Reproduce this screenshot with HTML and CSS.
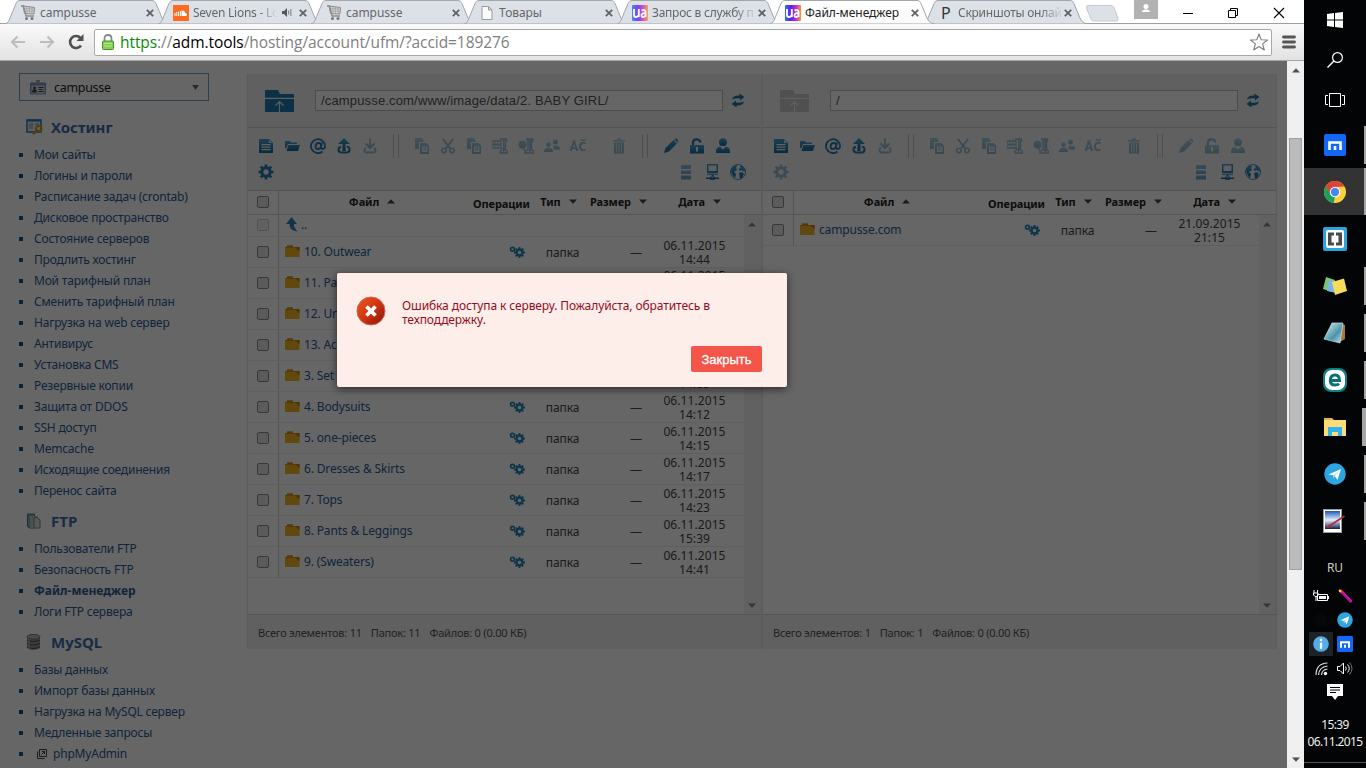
FILE: index.html
```html
<!DOCTYPE html>
<html lang="ru">
<head>
<meta charset="utf-8">
<title>Файл-менеджер</title>
<link rel="stylesheet" href="styles.css">
</head>
<body>
<svg class="defs" width="0" height="0">
  <defs>
    <linearGradient id="gTab" x1="0" y1="0" x2="0" y2="1"><stop offset="0" stop-color="#fff"/><stop offset="1" stop-color="#fafafa"/></linearGradient>
    <linearGradient id="gUa"><stop offset="0" stop-color="#2f6bff"/><stop offset=".35" stop-color="#5a22f0"/><stop offset=".65" stop-color="#c020e0"/><stop offset="1" stop-color="#ff9a20"/></linearGradient>
    <linearGradient id="gErr" x1="0" y1="0" x2="1" y2="1"><stop offset="0" stop-color="#ee5a1c"/><stop offset=".5" stop-color="#cf3410"/><stop offset="1" stop-color="#8c0f08"/></linearGradient>
    <linearGradient id="gBlue" x1="0" y1="0" x2="0" y2="1"><stop offset="0" stop-color="#4a9fce"/><stop offset="1" stop-color="#12699e"/></linearGradient>
    <linearGradient id="gGlass" x1="0" y1="0" x2="1" y2="1"><stop offset="0" stop-color="#dff3f7"/><stop offset=".6" stop-color="#4b95a8"/><stop offset="1" stop-color="#bfe6ee"/></linearGradient>
    <linearGradient id="gSky" x1="0" y1="0" x2="0" y2="1"><stop offset="0" stop-color="#1e56b8"/><stop offset=".5" stop-color="#e4efff"/><stop offset="1" stop-color="#101c4c"/></linearGradient>
  </defs>
  <symbol id="tab" viewBox="0 0 166 24"><path d="M0 24C3 23 4 21 5 18L11 3.500C12 1.500 13 .5 15 .5H147C149 .5 150 1.500 151 3.500L157 18C158.500 21 160 23 164 24Z"/></symbol>
  <symbol id="x" viewBox="0 0 8 8"><path d="M.8.8l6.400 6.400M7.200.8L.8 7.200" fill="none" stroke="#606164" stroke-width="1.800"/></symbol>
  <symbol id="cart" viewBox="0 0 16 16"><path d="M14.500 2.500L3 1 4.500 8.500 14 9z" fill="#d8d8d8" stroke="#8c8c8c"/><path d="M1 1h2.500L6 11h8" fill="none" stroke="#8b8b8b" stroke-width="1.400"/><path d="M4 3.500l10.500.6M4.500 6l9.800.2M7 2v7M9.500 2v7M12 2v7" stroke="#999" stroke-width=".7"/><circle cx="6.500" cy="13.500" r="1.500" fill="#777"/><circle cx="12" cy="13.500" r="1.500" fill="#777"/></symbol>
  <symbol id="ua" viewBox="0 0 16 16"><rect width="16" height="16" rx="1" fill="url(#gUa)"/><path d="M2 4v6q0 2 2 2 1.800 0 2.600-1.500M6.800 4v8M9.500 5.500Q13.500 4 13.500 7v5M13.500 8Q9.500 8 9.500 10.300q0 2.200 2 1.700 1.500-.3 2-1.500" fill="none" stroke="#fff" stroke-width="1.900"/></symbol>
  <symbol id="doc" viewBox="0 0 16 16"><path fill-rule="evenodd" d="M1 1h10l4 4v10H1zM3.500 6v1.200h9V6zm0 2.500v1.200h9V8.500zm0 2.500v1.200h9V11zM11 2v3h3z"/></symbol>
  <symbol id="open" viewBox="0 0 16 16"><path d="M1 3h5l1 1.500h6V6H4L2 11 1 9zM4.500 7H16l-2 6H2.500z"/></symbol>
  <symbol id="at" viewBox="0 0 16 16"><path d="M12.500 13.500A7 7 0 1 1 15 8.500Q14.800 11 12.700 11 10.800 11 11.200 8.500L12 4.500M11 8.500Q10.500 11 8 11 5.500 11 5.500 8.500 5.800 5 8.500 5 11.200 5 11 8" fill="none" stroke="currentColor" stroke-width="1.800"/></symbol>
  <symbol id="up" viewBox="0 0 16 16"><path d="M8 0l6 6H9.500V13h-3V6H2z"/><path d="M5 9Q2.500 9 2.500 11.500T5 14.500h6q2.500 0 2.500-3T11 9" fill="none" stroke="currentColor" stroke-width="2"/></symbol>
  <symbol id="down" viewBox="0 0 16 16"><path d="M7 0h2v7l3-2.500 1 2L8 11.500 3 6.500l1-2L7 7z"/><path d="M3.500 9.500Q1 14.500 5 14.500h6q4 0 1.500-5" fill="none" stroke="currentColor" stroke-width="2"/></symbol>
  <symbol id="copy" viewBox="0 0 16 16"><path fill-rule="evenodd" d="M1 0h6.500l2 2v2H5v7H1zM6 5h6.500L15 7.500V16H6zM8 8.500V14h5.500V8.500zM9 9.500h3.500v1H9zm0 2h3.500v1H9z"/></symbol>
  <symbol id="cut" viewBox="0 0 16 16"><path d="M3 1l7.500 10M13 1L5.500 11" fill="none" stroke="currentColor" stroke-width="2"/><circle cx="4" cy="12.500" r="2.200" fill="none" stroke="currentColor" stroke-width="1.600"/><circle cx="12" cy="12.500" r="2.200" fill="none" stroke="currentColor" stroke-width="1.600"/></symbol>
  <symbol id="zip" viewBox="0 0 16 16"><path d="M0 3h9v7H0zM3 4.500v4M6 4.500v4M1 6.500h8M8 1h6.500v2h-1v9l2 1v2H8v-2l2-1V10M11.700 1v13" fill="none" stroke="currentColor" stroke-width="1.300"/><path d="M11 4h2v1.500h-2zm0 3h2v1.500h-2zm0 3h2v1.500h-2z"/></symbol>
  <symbol id="unzip" viewBox="0 0 16 16"><circle cx="4.500" cy="6.500" r="4"/><path d="M5 10l2 2M8 1h6.500v2h-1v9l2 1v2H7v-2l3-1V1M12 1v13" fill="none" stroke="currentColor" stroke-width="1.500"/></symbol>
  <symbol id="users" viewBox="0 0 16 16"><circle cx="4.500" cy="6.500" r="2.300"/><path d="M0 14q0-4.500 4.500-4.500T9 14z"/><circle cx="11.500" cy="4" r="2.500"/><path d="M9 8q6.500-2 7.500 3.500H10z"/></symbol>
  <symbol id="trash" viewBox="0 0 16 16"><path d="M2 2h12v1.500H2zM6 .5h4v2H6zM3 4.500h10v11H3z"/><path d="M5.500 5.500v9M8 5.500v9M10.500 5.500v9" stroke="#eee" stroke-width=".8"/></symbol>
  <symbol id="pen" viewBox="0 0 16 16"><path d="M1 15l1.500-5 8-8 3.500 3.500-8 8zM11.300 1.200q1.700-1.500 3.200 0t0 3.200z"/></symbol>
  <symbol id="lock" viewBox="0 0 16 16"><path d="M4 7V4.500Q4 1.300 7.500 1.300T11.500 4.500" fill="none" stroke="currentColor" stroke-width="2.200"/><path fill-rule="evenodd" d="M1 7h14v8.500H1zM7 9v4.500h2V9z"/></symbol>
  <symbol id="user" viewBox="0 0 16 16"><circle cx="8" cy="4.200" r="3.900"/><path d="M1 15v-2q0-3.500 4-4.500l3 3 3-3q4 1 4 4.500v2z"/></symbol>
  <symbol id="gear" viewBox="0 0 16 16"><circle cx="8" cy="8" r="4.200" fill="none" stroke="currentColor" stroke-width="3"/><path d="M8 .5v3M8 12.500v3M.5 8h3M12.500 8h3M2.700 2.700l2 2M11.300 11.300l2 2M2.700 13.300l2-2M11.300 4.700l2-2" stroke="currentColor" stroke-width="2.600"/></symbol>
  <symbol id="gears" viewBox="0 0 16 12"><circle cx="3.500" cy="3.300" r="1.900" fill="none" stroke="currentColor" stroke-width="1.700"/><circle cx="10.500" cy="6.500" r="3" fill="none" stroke="currentColor" stroke-width="2.400"/><path d="M10.500 1v2M10.500 10v2M5 6.500h2M14 6.500h2M6.700 2.700l1.400 1.400M12.900 8.900l1.400 1.400M6.700 10.300l1.400-1.400M12.900 4.100l1.400-1.400" stroke="currentColor" stroke-width="1.800"/></symbol>
  <symbol id="rows" viewBox="0 0 16 16"><path d="M3 1h10v4H3zm0 5.500h10v3.500H3zM3 11.500h10v4H3z"/></symbol>
  <symbol id="pc" viewBox="0 0 16 16"><path fill-rule="evenodd" d="M3 0h11v9H3zM4.500 1.500v5.500h8V1.500zM3 9.700h11v1H3zM7.500 11h2v2.500h-2zM2 13.500h4v-.7h5v.7h4V15h-4v.7H6V15H2z"/></symbol>
  <symbol id="globe" viewBox="0 0 16 16"><circle cx="8" cy="8" r="7.500" fill="none" stroke="currentColor" stroke-width=".8"/><path d="M1 5l3-3.500 3.500 0L6 4 7 6 4 8l2 2-1 4-2-2-1.500-3zM10 1l3.500 2L15.500 7l-2 .5-2-1.500-2 1-1-2 2-1zM9 9l3-1 2 2-2 4-2 .5-.5-3z"/></symbol>
  <symbol id="refresh" viewBox="0 0 14 14"><path d="M1 6Q2 1.500 8.500 2V0L13.500 3.500 9 7V5Q5 4.300 1 6zM13 8Q12 12.500 5.500 12V14L.5 10.500 5 7V9Q9 9.700 13 8z"/></symbol>
  <symbol id="bigup" viewBox="0 0 29 22"><path d="M0 1Q0 0 1 0h12l2 4h13q1 0 1 1v2.700H0z"/><path d="M0 9h29v12q0 1-1 1H1q-1 0-1-1z"/><path d="M14.500 22V12M10.500 15.500l4-4 4 4" fill="none" stroke="#eee" stroke-width="1.100"/></symbol>
  <symbol id="folder" viewBox="0 0 15 12"><path d="M0 2h2V.5h6V2h6.500v10H0z" fill="#f0b323"/><path d="M0 2h2V.5h6V2h4v.8H0z" fill="#d08c18"/><path d="M10 2h4.500v4.500z" fill="#c97b10"/></symbol>
  <symbol id="sortd" viewBox="0 0 8 5"><path d="M0 .5h8L4 4.800z" fill="#444"/></symbol>
  <symbol id="sortu" viewBox="0 0 8 5"><path d="M0 4.500h8L4 .2z" fill="#444"/></symbol>
  <symbol id="mx" viewBox="0 0 22 22"><rect width="22" height="22" rx="2" fill="#1268f5"/><path d="M5.500 16V8.500h11V16M11 12v4" fill="none" stroke="#fff" stroke-width="2.600"/></symbol>
  <symbol id="tg" viewBox="0 0 22 22"><circle cx="11" cy="11" r="10.700" fill="#2ca5e0"/><path d="M4.500 11.500L17 6l-3.500 11-3-4.500z" fill="#fff"/><path d="M9 12.500l6-4.500-4.500 5.500-1 2.500z" fill="#b8d8ea"/></symbol>
</svg>

<div class="browser">
  <div class="tabs">
    <div class="tab"><svg class="tab-bg"><use href="#tab"/></svg><svg class="fav"><use href="#cart"/></svg><span class="tab-title">campusse</span><svg class="tab-x"><use href="#x"/></svg></div>
    <div class="tab"><svg class="tab-bg"><use href="#tab"/></svg><svg class="fav" viewBox="0 0 16 16"><rect width="16" height="16" fill="#ff6a22"/><path d="M2 8v3M3.800 7v4M5.600 6.500V11M7.400 6v5" stroke="#fff"/><path d="M8.500 11V5.500Q12 5 12 8q2-.3 2 1.500T12.500 11z" fill="#fff"/></svg><span class="tab-title fade short">Seven Lions - Lo</span><svg class="sound" viewBox="0 0 10 9"><path d="M0 3h2l3-3v9L2 6H0z" fill="#555"/><path d="M6.700 2.500v4M8.900 1v7" stroke="#777"/></svg><svg class="tab-x"><use href="#x"/></svg></div>
    <div class="tab"><svg class="tab-bg"><use href="#tab"/></svg><svg class="fav"><use href="#cart"/></svg><span class="tab-title">campusse</span><svg class="tab-x"><use href="#x"/></svg></div>
    <div class="tab"><svg class="tab-bg"><use href="#tab"/></svg><svg class="fav" viewBox="0 0 16 16"><path d="M3 1.500h6.500l3.500 3.500v9.500H3zM9.500 1.500v3.500H13" fill="#fafafa" stroke="#999"/></svg><span class="tab-title">Товары</span><svg class="tab-x"><use href="#x"/></svg></div>
    <div class="tab"><svg class="tab-bg"><use href="#tab"/></svg><svg class="fav dim"><use href="#ua"/></svg><span class="tab-title fade">Запрос в службу п</span><svg class="tab-x"><use href="#x"/></svg></div>
    <div class="tab active"><svg class="tab-bg"><use href="#tab"/></svg><svg class="fav"><use href="#ua"/></svg><span class="tab-title">Файл-менеджер</span><svg class="tab-x"><use href="#x"/></svg></div>
    <div class="tab"><svg class="tab-bg"><use href="#tab"/></svg><span class="fav fav-p">P</span><span class="tab-title fade">Скриншоты онлай</span><svg class="tab-x"><use href="#x"/></svg></div>
    <svg class="newtab" viewBox="0 0 34 17"><path d="M3 .5h23q2 0 3 2l4 11q.5 2.500-1.500 2.500H9q-2 0-3-2L1.500 3Q1 .5 3 .5z" fill="#dce1e8" stroke="#c6cad0"/></svg>
    <div class="winctl">
      <svg class="profile" viewBox="0 0 24 19"><rect width="24" height="19" fill="#b2b2b2"/><circle cx="12" cy="6.500" r="2.500" fill="#fff"/><path d="M8 12q0-2.500 4-2.500t4 2.500z" fill="#fff"/></svg>
      <svg class="min" viewBox="0 0 10 10"><path d="M0 5.500h10" stroke="#000"/></svg>
      <svg class="max" viewBox="0 0 10 10"><path d="M.5 2.500h7v7h-7zM2.500 2.500v-2h7v7h-2" fill="none" stroke="#000"/></svg>
      <svg class="cls" viewBox="0 0 10 10"><path d="M0 0l10 10M10 0L0 10" stroke="#000" stroke-width="1.100"/></svg>
    </div>
  </div>
  <div class="navbar">
    <svg class="nav-ico" viewBox="0 0 16 14"><path d="M15 7H2M7.500 1.500L2 7l5.500 5.500" fill="none" stroke="#bdbdbd" stroke-width="2.200"/></svg>
    <svg class="nav-ico" viewBox="0 0 16 14"><path d="M1 7h13M8.500 1.500L14 7l-5.500 5.500" fill="none" stroke="#bdbdbd" stroke-width="2.200"/></svg>
    <svg class="nav-ico reload" viewBox="0 0 16 16"><path d="M13 11.500A6 6 0 1 1 12.500 4" fill="none" stroke="#505050" stroke-width="2.600"/><path d="M15.500 0v7H8.500z" fill="#505050"/></svg>
    <div class="omnibox">
      <svg class="padlock" viewBox="0 0 12 16"><path d="M2.500 8V4.500Q2.500 1 6 1t3.500 3.500V8" fill="none" stroke="#8a8a8a" stroke-width="1.800"/><rect x=".5" y="7" width="11" height="8.500" rx="1" fill="#82cf54" stroke="#46922b"/><path d="M2 9.500h8M2 12h8" stroke="#b4e795"/></svg>
      <div class="url"><span class="secure">https</span>://<span class="host">adm.tools</span>/hosting/account/ufm/?accid=189276</div>
      <svg class="star" viewBox="0 0 18 18"><path d="M9 1l2.200 5.800 6.300.2-4.900 3.900 1.700 6.100L9 13.500 3.700 17l1.700-6.100L.5 7l6.300-.2z" fill="#fff" stroke="#7d7d7d" stroke-width="1.100" stroke-linejoin="round"/></svg>
    </div>
    <svg class="burger" viewBox="0 0 14 14"><path d="M1.500 2h11M1.500 7h11M1.500 12h11" stroke="#555" stroke-width="2.800" stroke-linecap="round"/></svg>
  </div>

  <div class="view">
    <div class="page">
      <aside class="side">
        <div class="account">
          <svg class="acc-ico" viewBox="0 0 16 15"><rect y="2.500" width="16" height="12" rx="1" fill="#7b97c8"/><rect x="1.500" y="5.500" width="13" height="8" fill="#d9dde6"/><path d="M6 0h4v4H6z" fill="#aaa"/><circle cx="4.500" cy="8" r="1.400" fill="#444"/><path d="M2.500 12q0-2.500 2-2.500t2 2.500zM8.500 7.500h5M8.500 9.500h4M8.500 11.500h5" fill="#444" stroke="#444"/></svg>
          <span class="acc-name">campusse</span>
          <svg class="acc-arrow" viewBox="0 0 8 6"><path d="M0 0h8L4 6z" fill="#6a6a6a"/></svg>
        </div>
        <h2><svg viewBox="0 0 17 16"><rect x="1" y="1" width="14" height="12" fill="#e6eef6" stroke="#217fb8" stroke-width="1.500"/><path d="M1 1.500h14" stroke="#217fb8" stroke-width="2"/><path d="M3 5h4M3 7h4M3 9h4M9 5h4" stroke="#888"/><circle cx="12.800" cy="9.500" r="2.700" fill="none" stroke="#d8962c" stroke-width="2"/><path d="M11 11.500L7 15" stroke="#d8962c" stroke-width="2.400"/></svg>Хостинг</h2>
        <ul>
          <li>Мои сайты</li><li>Логины и пароли</li><li>Расписание задач (crontab)</li><li>Дисковое пространство</li><li>Состояние серверов</li><li>Продлить хостинг</li><li>Мой тарифный план</li><li>Сменить тарифный план</li><li>Нагрузка на web сервер</li><li>Антивирус</li><li>Установка CMS</li><li>Резервные копии</li><li>Защита от DDOS</li><li>SSH доступ</li><li>Memcache</li><li>Исходящие соединения</li><li>Перенос сайта</li>
        </ul>
        <h2><svg viewBox="0 0 17 16"><path d="M1.500 1h7v14H4l-2.500-1.500z" fill="#88a9b4" stroke="#527683"/><path d="M4 3h8v12H4z" fill="#b4c9d0"/><path d="M8 4.500h3.500l2.500 2.500v8H8z" fill="#ddd" stroke="#888"/></svg>FTP</h2>
        <ul><li>Пользователи FTP</li><li>Безопасность FTP</li><li class="current">Файл-менеджер</li><li>Логи FTP сервера</li></ul>
        <h2><svg viewBox="0 0 17 16"><path d="M1 3v11q6 4 13 0V3z" fill="#999"/><path d="M1 6q6 3 13 0M1 9.500q6 3 13 0M1 13q6 3 13 0" fill="none" stroke="#555" stroke-width="1.100"/><path d="M3 5v10" stroke="#ccc" stroke-width="2" opacity=".5"/><ellipse cx="7.500" cy="2.800" rx="6.500" ry="2.300" fill="#bbb" stroke="#777"/></svg>MySQL</h2>
        <ul><li>Базы данных</li><li>Импорт базы данных</li><li>Нагрузка на MySQL сервер</li><li>Медленные запросы</li><li><svg class="ext" viewBox="0 0 10 10"><path d="M2.500.5h7v7h-7zM.5 2.500v7h7M4.500 5.500l3-3M5 2.500h2.500V5" fill="none" stroke="#444"/></svg>phpMyAdmin</li></ul>
      </aside>

      <main class="fm">
        <section class="pane">
          <div class="path"><svg class="bigup"><use href="#bigup"/></svg><div class="path-in">/campusse.com/www/image/data/2. BABY GIRL/</div><svg class="refresh"><use href="#refresh"/></svg></div>
          <div class="tools">
            <div class="tool-row">
              <svg><use href="#doc"/></svg><svg><use href="#open"/></svg><svg><use href="#at"/></svg><svg><use href="#up"/></svg><svg class="off"><use href="#down"/></svg>
              <i class="sep"></i>
              <svg class="off"><use href="#copy"/></svg><svg class="off"><use href="#cut"/></svg><svg class="off"><use href="#copy"/></svg><svg class="off"><use href="#zip"/></svg><svg class="off"><use href="#unzip"/></svg><svg class="off"><use href="#users"/></svg><b class="enc off">ÅČ</b><svg class="off trash"><use href="#trash"/></svg>
              <i class="sep"></i>
              <svg><use href="#pen"/></svg><svg><use href="#lock"/></svg><svg><use href="#user"/></svg>
            </div>
            <div class="tool-row second"><svg><use href="#gear"/></svg><span class="views"><svg class="half"><use href="#rows"/></svg><svg><use href="#pc"/></svg><svg><use href="#globe"/></svg></span></div>
          </div>
          <div class="row thead"><span class="c-check"><i class="cb"></i></span><span>Файл<svg><use href="#sortu"/></svg></span><span class="ops-h">Операции</span><span>Тип<svg><use href="#sortd"/></svg></span><span>Размер<svg><use href="#sortd"/></svg></span><span>Дата<svg><use href="#sortd"/></svg></span></div>
          <div class="body">
            <div class="list">
              <div class="row parent"><span class="c-check"><i class="cb faint"></i></span><span class="c-name"><svg class="back" viewBox="0 0 13 15"><path d="M0 7L5.500 0 11 7H8q0 5 4 7.500Q3 14 3.500 7z" fill="#2e86b5"/></svg>..</span></div>
              <div class="row"><span class="c-check"><i class="cb"></i></span><span class="c-name"><svg><use href="#folder"/></svg>10. Outwear</span><span class="c-op"><svg><use href="#gears"/></svg></span><span class="c-type">папка</span><span class="c-size">—</span><span class="c-date">06.11.2015<br>14:44</span></div>
              <div class="row"><span class="c-check"><i class="cb"></i></span><span class="c-name"><svg><use href="#folder"/></svg>11. Pa</span><span class="c-op"></span><span class="c-type"></span><span class="c-size"></span><span class="c-date lead">06.11.2015</span></div>
              <div class="row"><span class="c-check"><i class="cb"></i></span><span class="c-name"><svg><use href="#folder"/></svg>12. Un</span></div>
              <div class="row"><span class="c-check"><i class="cb"></i></span><span class="c-name"><svg><use href="#folder"/></svg>13. Ac</span></div>
              <div class="row"><span class="c-check"><i class="cb"></i></span><span class="c-name"><svg><use href="#folder"/></svg>3. Set</span><span class="c-op"></span><span class="c-type"></span><span class="c-size"></span><span class="c-date tail">14:09</span></div>
              <div class="row"><span class="c-check"><i class="cb"></i></span><span class="c-name"><svg><use href="#folder"/></svg>4. Bodysuits</span><span class="c-op"><svg><use href="#gears"/></svg></span><span class="c-type">папка</span><span class="c-size">—</span><span class="c-date">06.11.2015<br>14:12</span></div>
              <div class="row"><span class="c-check"><i class="cb"></i></span><span class="c-name"><svg><use href="#folder"/></svg>5. one-pieces</span><span class="c-op"><svg><use href="#gears"/></svg></span><span class="c-type">папка</span><span class="c-size">—</span><span class="c-date">06.11.2015<br>14:15</span></div>
              <div class="row"><span class="c-check"><i class="cb"></i></span><span class="c-name"><svg><use href="#folder"/></svg>6. Dresses &amp; Skirts</span><span class="c-op"><svg><use href="#gears"/></svg></span><span class="c-type">папка</span><span class="c-size">—</span><span class="c-date">06.11.2015<br>14:17</span></div>
              <div class="row"><span class="c-check"><i class="cb"></i></span><span class="c-name"><svg><use href="#folder"/></svg>7. Tops</span><span class="c-op"><svg><use href="#gears"/></svg></span><span class="c-type">папка</span><span class="c-size">—</span><span class="c-date">06.11.2015<br>14:23</span></div>
              <div class="row"><span class="c-check"><i class="cb"></i></span><span class="c-name"><svg><use href="#folder"/></svg>8. Pants &amp; Leggings</span><span class="c-op"><svg><use href="#gears"/></svg></span><span class="c-type">папка</span><span class="c-size">—</span><span class="c-date">06.11.2015<br>15:39</span></div>
              <div class="row"><span class="c-check"><i class="cb"></i></span><span class="c-name"><svg><use href="#folder"/></svg>9. (Sweaters)</span><span class="c-op"><svg><use href="#gears"/></svg></span><span class="c-type">папка</span><span class="c-size">—</span><span class="c-date">06.11.2015<br>14:41</span></div>
            </div>
            <div class="track"><svg><use href="#sortu"/></svg><svg><use href="#sortd"/></svg></div>
          </div>
          <div class="foot"><span>Всего элементов: 11</span><span>Папок: 11</span><span>Файлов: 0 (0.00 КБ)</span></div>
        </section>

        <section class="pane">
          <div class="path"><svg class="bigup grey"><use href="#bigup"/></svg><div class="path-in">/</div><svg class="refresh"><use href="#refresh"/></svg></div>
          <div class="tools">
            <div class="tool-row">
              <svg><use href="#doc"/></svg><svg><use href="#open"/></svg><svg><use href="#at"/></svg><svg><use href="#up"/></svg><svg class="off"><use href="#down"/></svg>
              <i class="sep"></i>
              <svg class="off"><use href="#copy"/></svg><svg class="off"><use href="#cut"/></svg><svg class="off"><use href="#copy"/></svg><svg class="off"><use href="#zip"/></svg><svg class="off"><use href="#unzip"/></svg><svg class="off"><use href="#users"/></svg><b class="enc off">ÅČ</b><svg class="off trash"><use href="#trash"/></svg>
              <i class="sep"></i>
              <svg class="off"><use href="#pen"/></svg><svg class="off"><use href="#lock"/></svg><svg class="off"><use href="#user"/></svg>
            </div>
            <div class="tool-row second"><svg class="off"><use href="#gear"/></svg><span class="views"><svg class="half"><use href="#rows"/></svg><svg><use href="#pc"/></svg><svg><use href="#globe"/></svg></span></div>
          </div>
          <div class="row thead"><span class="c-check"><i class="cb"></i></span><span>Файл<svg><use href="#sortu"/></svg></span><span class="ops-h">Операции</span><span>Тип<svg><use href="#sortd"/></svg></span><span>Размер<svg><use href="#sortd"/></svg></span><span>Дата<svg><use href="#sortd"/></svg></span></div>
          <div class="body">
            <div class="list">
              <div class="row"><span class="c-check"><i class="cb"></i></span><span class="c-name"><svg><use href="#folder"/></svg>campusse.com</span><span class="c-op"><svg><use href="#gears"/></svg></span><span class="c-type">папка</span><span class="c-size">—</span><span class="c-date">21.09.2015<br>21:15</span></div>
            </div>
            <div class="track"><svg><use href="#sortu"/></svg><svg><use href="#sortd"/></svg></div>
          </div>
          <div class="foot"><span>Всего элементов: 1</span><span>Папок: 1</span><span>Файлов: 0 (0.00 КБ)</span></div>
        </section>
      </main>

      <div class="shade">
        <div class="dialog">
          <svg class="err" viewBox="0 0 30 30"><circle cx="15" cy="15" r="14" fill="url(#gErr)" stroke="#c9675a"/><path d="M10.500 10.500l9 9M19.500 10.500l-9 9" stroke="#fff" stroke-width="3.800"/></svg>
          <p>Ошибка доступа к серверу. Пожалуйста, обратитесь в техподдержку.</p>
          <button type="button">Закрыть</button>
        </div>
      </div>
    </div>
    <div class="scroll"><svg viewBox="0 0 8 5"><path d="M0 4.500h8L4 .2z" fill="#505050"/></svg><div class="thumb"></div><svg class="sdown" viewBox="0 0 8 5"><path d="M0 .5h8L4 4.800z" fill="#505050"/></svg></div>
  </div>
</div>

<div class="taskbar">
  <div class="sys"><svg width="16" height="16" viewBox="0 0 16 16"><path d="M0 2l7-1v6.500H0zM8 .9L16 0v7.500H8zM0 8.500h7V15l-7-1zM8 8.500h8V16l-8-.9z" fill="#fff"/></svg></div>
  <div class="sys"><svg width="16" height="16" viewBox="0 0 16 16"><circle cx="10.500" cy="5.500" r="4.900" fill="none" stroke="#fff" stroke-width="1.200"/><path d="M7 9L.5 15.500" stroke="#fff" stroke-width="1.400"/></svg></div>
  <div class="sys"><svg width="20" height="14" viewBox="0 0 20 14"><path d="M4.500.5h11v13h-11zM3 2.500H.5v9H3M17 2.500h2.500v9H17" fill="none" stroke="#fff"/></svg></div>
  <div class="app run"><svg width="22" height="22"><use href="#mx"/></svg></div>
  <div class="app run on"><svg width="22" height="22" viewBox="0 0 22 22"><circle cx="11" cy="11" r="11" fill="#fbd038"/><path d="M1.500 5.500A11 11 0 0 1 20.500 5.500L11 6 6 13z" fill="#dc4437"/><path d="M1.500 5.500L7 14l4 2-1.500 6A11 11 0 0 1 1.500 5.500z" fill="#1ba15d"/><circle cx="11" cy="11" r="5.200" fill="#fff"/><circle cx="11" cy="11" r="4.200" fill="#4587f3"/></svg></div>
  <div class="app"><svg width="24" height="24" viewBox="0 0 24 24"><rect width="24" height="24" rx="2" fill="#2aa4dc"/><rect x="3" y="3" width="18" height="18" rx="2" fill="#fff"/><path d="M5 5.500h6v3H8.500v7H11v3H5zM13 5.500h6v13h-6v-3h2.500v-7H13z" fill="#4a4a4a"/></svg></div>
  <div class="app run"><svg width="24" height="20" viewBox="0 0 24 20"><path d="M3 1l9 3-3 12-9-3z" fill="#7cc576"/><path d="M6 4l9 2-2 11-9-2z" fill="#78b4e6"/><path d="M9 6l12-3.500 3 12.500-12 4z" fill="#f7dc5c"/></svg></div>
  <div class="app run"><svg width="22" height="22" viewBox="0 0 22 22"><path d="M18 2l3 1v14l-5 3z" fill="#a9793a"/><path d="M8 1l11 0-3 20-16-4z" fill="url(#gGlass)" stroke="#cfe8ee" stroke-width=".7"/></svg></div>
  <div class="app run"><svg width="24" height="24" viewBox="0 0 24 24"><rect width="24" height="24" rx="8" fill="#0b8285"/><rect x="2" y="2" width="20" height="20" rx="7" fill="#fff"/><path d="M7.500 12.500h9Q16.500 7 12 7T7.300 12.200Q7.300 17 12 17 15 17 16 15.500" fill="none" stroke="#0b7074" stroke-width="3"/></svg></div>
  <div class="app run wide"><svg width="22" height="18" viewBox="0 0 22 18"><path d="M0 0h8l1.500 2H22v16H0z" fill="#fddc77"/><path d="M0 0h8l1.500 2H0z" fill="#e8b33a"/><path d="M4 18V9h14v9h-4v-4H8v4z" fill="#31b4ec"/></svg></div>
  <div class="app run"><svg width="22" height="22"><use href="#tg"/></svg></div>
  <div class="app run"><svg class="photo" width="22" height="24" viewBox="0 0 22 24"><rect x=".5" y=".5" width="18" height="23" fill="#fff" stroke="#999"/><rect x="2" y="2" width="15" height="18" fill="url(#gSky)"/><path d="M21.500 7L4 18.500" stroke="#b03030" stroke-width="1.800"/></svg></div>
  <div class="lang">RU</div>
  <div class="tray">
    <svg width="16" height="12" viewBox="0 0 16 12"><path d="M4.500 4.500h10v6h-10zM15.500 6v3M3 7v4M1 0v3M4.500 0v3M.5 3h4.500v2l-1 1.500H2L.5 5z" fill="none" stroke="#fff"/><path d="M6 6h7v3H6z" fill="#fff"/></svg>
    <svg width="13" height="13" viewBox="0 0 13 13"><path d="M1 0l11.500 12" stroke="#e3119b" stroke-width="3"/><path d="M3 3l9 9" stroke="#7416c7"/><path d="M0 0l2 2" stroke="#ffe000" stroke-width="2"/></svg>
    <svg width="16" height="14" viewBox="0 0 16 14"><path d="M3 6l1.500-6h7L13 6l3 1H0zM2 8h12v6H2z" fill="#080808"/></svg>
    <svg width="16" height="16"><use href="#tg"/></svg>
    <div class="hot"><svg width="16" height="16" viewBox="0 0 16 16"><circle cx="8" cy="8" r="7.800" fill="#57ace6"/><path d="M8 2.800v2.400M8 6.800v6" stroke="#fff" stroke-width="2.300"/></svg></div>
    <svg width="16" height="16"><use href="#mx"/></svg>
    <svg width="13" height="13" viewBox="0 0 13 13"><path d="M1 13Q1 1.500 12.500 1M3.500 13Q4 5 12.500 4M6.500 13q.5-5.500 6-6" fill="none" stroke="#ddd" stroke-width="1.200"/><circle cx="10.500" cy="11.500" r="1.700" fill="#fff"/></svg>
    <svg width="16" height="13" viewBox="0 0 16 13"><path d="M.5 4.500H3L6.500 1v11L3 8.500H.5zM8.500 4.500q1.500 2 0 4M10.500 2.500q3.500 4 0 8" fill="none" stroke="#fff"/><path d="M12.500.5q5 6 0 12" fill="none" stroke="#777"/></svg>
  </div>
  <div class="note"><svg width="16" height="16" viewBox="0 0 16 16"><path d="M0 0h16v12h-5l-3 4-3-4H0z" fill="#fff"/><path d="M3 3.500h10M3 6h10M3 8.500h6" stroke="#000"/></svg></div>
  <div class="clock">15:39<br>06.11.2015</div>
</div>
</body>
</html>
```
FILE: styles.css
```css
* { box-sizing: border-box; }
body { margin: 0; width: 1366px; height: 768px; overflow: hidden; display: flex; background: #000; font-family: "Noto Sans", sans-serif; font-size: 12px; }
svg { display: block; flex: none; overflow: visible; }
.defs { position: absolute; }

.browser { width: 1304px; height: 768px; display: flex; flex-direction: column; }

/* Tab strip */
.tabs { height: 24px; background: #fff; display: flex; padding-left: 5px; border-bottom: 1px solid #9c9fa3; flex: none; }
.tab { position: relative; width: 166px; height: 24px; margin-right: -13px; padding: 1px 10px 0 15px; display: flex; align-items: center; flex: none; color: #666; }
.tab-bg { position: absolute; left: 0; top: 0; width: 166px; height: 24px; fill: #dce1e8; stroke: #a3a6ab; z-index: 0; }
.active { z-index: 2; color: #222; }
.active .tab-bg { fill: url(#gTab); }
.fav, .tab-title, .tab-x, .sound { position: relative; z-index: 1; }
.fav { width: 16px; height: 16px; margin-right: 4px; flex: none; }
.dim { opacity: .8; }
.fav-p { font: 16px/16px "Noto Sans", sans-serif; color: #333; padding-left: 3px; }
.tab-title { flex: 1; font-size: 12px; line-height: 18px; white-space: nowrap; overflow: hidden; letter-spacing: -.05px; }
.fade { mask-image: linear-gradient(90deg, #000 78%, transparent); letter-spacing: -.25px; }
.tab-title.short { flex: 0 0 84px; }
.sound { width: 10px; height: 9px; margin-left: 5px; }
.tab-x { width: 8px; height: 8px; margin: 0 7px 0 auto; }
.newtab { width: 34px; height: 17px; margin: 5px 0 0 9px; }
.winctl { display: flex; margin-left: 15px; }
.profile { width: 24px; height: 19px; }
.min, .max, .cls { width: 10px; height: 10px; margin-top: 8px; }
.min { margin-left: 25px; }
.max { margin-left: 35px; }
.cls { margin-left: 36px; }

/* Address bar */
.navbar { height: 37px; flex: none; display: flex; align-items: center; padding: 0 8px 0 10px; background: linear-gradient(#fafafa, #e2e2e2); border-bottom: 1px solid #a5a5a5; }
.nav-ico { width: 16px; height: 14px; margin-right: 13px; }
.reload { height: 16px; margin-right: 10px; }
.omnibox { width: 1178px; height: 27px; background: #fff; border: 1px solid #a8a8a8; border-radius: 2px; display: flex; align-items: center; padding: 0 3px 0 7px; }
.padlock { width: 12px; height: 16px; margin-right: 6px; }
.url { flex: 1; font: 15.500px/24px "Open Sans", "Noto Sans", sans-serif; color: #808080; letter-spacing: -.07px; }
.secure { color: #0b8a0b; }
.host { color: #000; }
.star { width: 18px; height: 18px; }
.burger { width: 14px; height: 14px; margin-left: 10px; }

/* Page area */
.view { display: flex; flex: 1; min-height: 0; }
.page { position: relative; width: 1287px; overflow: hidden; background: #fff; display: flex; padding: 12px 10px 0 19px; }
.side { width: 228px; flex: none; }
.account { width: 190px; height: 28px; border: 1px solid #74a0c4; display: flex; align-items: center; padding: 0 9px 0 10px; font-size: 12.500px; letter-spacing: -.3px; color: #222; margin-bottom: 6px; }
.acc-ico { width: 16px; height: 15px; margin-right: 8px; }
.acc-name { flex: 1; }
.acc-arrow { width: 7px; height: 5px; }
.side h2 { margin: 0; height: 37px; padding: 3px 0 0 7px; display: flex; align-items: center; font-size: 15px; color: #3c6cac; }
.side h2 svg { width: 17px; height: 16px; margin-right: 8px; }
.side ul { margin: 0; padding: 0; list-style: none; }
.side li { height: 21px; line-height: 21px; display: flex; align-items: center; color: #2c5a94; white-space: nowrap; letter-spacing: -.2px; }
.side li::before { content: ""; width: 4px; height: 4px; background: #065a9c; margin-right: 11px; }
.side .current { font-weight: 700; letter-spacing: 0; }
.ext { width: 10px; height: 10px; margin: 0 6px 0 3px; }

.fm { display: flex; margin-top: 1px; height: 575px; }
.pane { width: 515px; display: flex; flex-direction: column; background: #f0f0f0; border: 1px solid #e5e5e5; border-width: 0 1px; }
.path { height: 54px; flex: none; display: flex; align-items: center; padding-left: 17px; border-bottom: 1px solid #cfcfcf; }
.bigup { width: 29px; height: 22px; margin-right: 21px; fill: #1e78ac; }
.bigup.grey { fill: #c8c8c8; }
.path-in { width: 408px; height: 21px; border: 1px solid #bdbdbd; background: #fff; padding-left: 5px; font: 13px/19px "Liberation Sans", Arial, sans-serif; letter-spacing: .16px; color: #555; }
.refresh { width: 14px; height: 15px; margin-left: 8px; fill: #2277aa; }
.tools { height: 63px; flex: none; padding: 5px 0 0 5px; border-bottom: 1px solid #cfcfcf; }
.tool-row { height: 26px; display: flex; align-items: center; color: #2479ad; }
.tool-row svg { width: 16px; height: 16px; margin: 0 5px; fill: url(#gBlue); }
.tool-row .off { opacity: .45; }
.tool-row .half { opacity: .6; }
.tool-row .trash { margin-left: 20px; }
.enc { width: 26px; text-align: center; font: bold 13px/16px "Noto Sans", sans-serif; }
.sep { width: 6px; height: 24px; margin: 0 10px; border: 1px solid #c3c3c3; border-width: 0 1px; }
.second { justify-content: space-between; padding-right: 10px; }
.views { display: flex; }

.row { height: 31px; display: grid; grid-template-columns: 31px 189px 67px 50px 70px 89px; align-items: center; border-bottom: 1px solid #eee; color: #444; letter-spacing: -.1px; }
.thead { height: 24px; flex: none; background: #fff; border-bottom: 1px solid #d4d4d4; font-weight: 700; font-size: 11px; color: #222; }
.thead > span { display: flex; align-items: center; justify-content: center; height: 21px; padding: 0 3px 2px 0; }
.thead svg { width: 8px; height: 5px; margin-left: 8px; }
.thead .ops-h { padding: 1px 0 0; }
.thead > span:last-child { padding-right: 0; }
.row .c-check { align-self: stretch; height: auto; border-right: 1px solid #d4d4d4; display: flex; align-items: center; justify-content: center; padding: 0 0 1px; }
.parent { height: 22px; }
.cb { width: 12px; height: 12px; border: 1px solid #8c8c8c; border-radius: 2px; background: #e4e4e4; }
.faint { opacity: .45; }
.c-name { display: flex; align-items: center; padding: 0 0 2px 6px; color: #2c5a94; white-space: nowrap; letter-spacing: -.15px; }
.c-name svg { width: 15px; height: 12px; margin-right: 4px; }
.c-name .back { width: 13px; height: 15px; margin: 0 2px 0 1px; }
.c-op { padding-left: 41px; color: #2a84b8; }
.c-op svg { width: 16px; height: 12px; }
.c-type { text-align: center; padding: 0 0 0 5px; }
.c-size { text-align: right; padding: 0 13px 0 0; }
.c-date { text-align: center; padding: 1px 10px 0 0; line-height: 14px; letter-spacing: .08px; }
.lead { align-self: start; }
.tail { align-self: end; }
.body { flex: 1; display: flex; background: #fff; border-bottom: 1px solid #d4d4d4; min-height: 0; }
.list { width: 496px; }
.track { width: 17px; background: #f0f0f0; display: flex; flex-direction: column; justify-content: space-between; align-items: center; padding: 7px 2px 6px 0; opacity: .8; }
.track svg { width: 8px; height: 5px; opacity: .8; }
.foot { height: 34px; flex: none; display: flex; align-items: center; gap: 9px; padding-left: 10px; font-size: 11px; letter-spacing: -.22px; color: #555; }

/* Modal layer */
.shade { position: absolute; inset: 0; background: rgba(0, 0, 0, .6); padding: 212px 0 0 337px; }
.dialog { width: 450px; height: 114px; background: #feeeea; border-radius: 2px; box-shadow: 0 2px 8px rgba(0, 0, 0, .6); display: grid; grid-template: 73px 26px / 65px 360px; }
.err { width: 30px; height: 30px; margin: 23px 0 0 19px; }
.dialog p { margin: 26px 0 0; width: 340px; line-height: 14px; letter-spacing: -.1px; color: #920d22; }
.dialog button { grid-column: 2; justify-self: end; width: 71px; height: 26px; border: 0; border-radius: 2px; padding: 0; background: #f35548; color: #fff; font: 13px "Liberation Sans", Arial, sans-serif; -webkit-text-stroke: .3px #fff; }

.scroll { width: 17px; background: #f0f0f0; display: flex; flex-direction: column; align-items: center; padding: 7px 0 6px; }
.scroll svg { width: 8px; height: 5px; }
.thumb { width: 13px; height: 432px; margin-top: 65px; background: #bbb; border: 1px solid #9f9f9f; }
.sdown { margin-top: auto; }

/* Taskbar */
.taskbar { width: 62px; background: #020405; color: #f0f0f0; }
.sys { height: 40px; display: grid; place-items: center; }
.app { height: 47px; display: flex; align-items: center; justify-content: center; }
.sys + .app { margin-top: 1px; }
.run { background: linear-gradient(#a5a5a5, #a5a5a5) right center / 2px 38px no-repeat; }
.on { background-color: #333; background-size: 2px 47px; }
.wide { background-size: 4px 38px; }
.photo { margin-right: 2px; }
.lang { height: 40px; padding-top: 15px; line-height: 18px; text-align: center; color: #ccc; }
.tray { display: grid; grid-template-columns: 24px 24px; grid-auto-rows: 24px; place-items: center; padding-left: 5px; }
.hot { width: 24px; height: 24px; background: #1c2226; display: grid; place-items: center; }
.note { height: 24px; display: grid; place-items: center; }
.clock { margin-top: 12px; line-height: 17px; text-align: center; white-space: nowrap; font-size: 12px; letter-spacing: -.65px; padding-bottom: 12px; border-bottom: 1px solid #555; }
```
